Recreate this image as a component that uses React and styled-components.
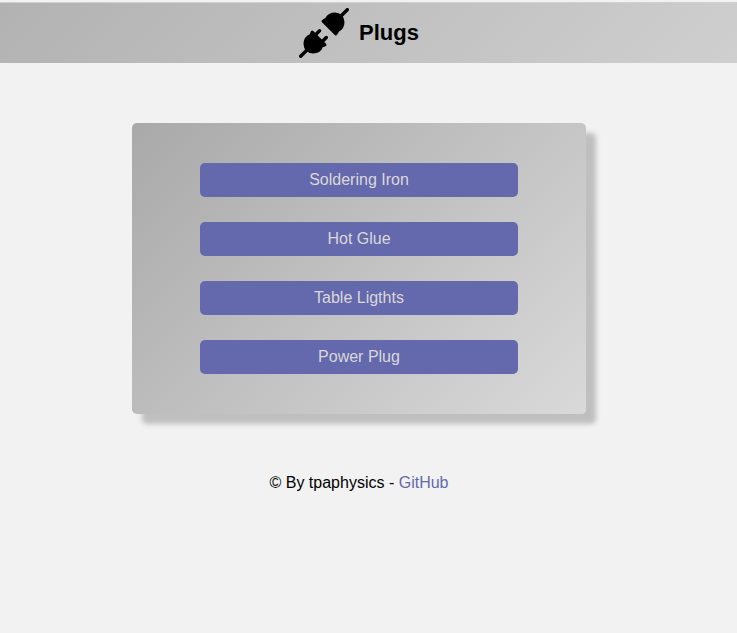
import React from "react";
import styled, { createGlobalStyle } from "styled-components";

const GlobalStyle = createGlobalStyle`
  * {
    box-sizing: border-box;
  }

  body {
    margin: 0;
    background: #f2f2f2;
    color: #000;
    font-family: "Liberation Sans", Arial, sans-serif;
    font-size: 16px;
    line-height: 18px;
  }
`;

const Page = styled.div`
  padding-top: 2px;
`;

const Header = styled.header`
  display: flex;
  align-items: center;
  justify-content: center;
  gap: 10px;
  padding: 5px 19px 5px 0;
  border-top: 1px solid #d0d0d0;
  background: linear-gradient(135deg, #b2b2b2, #cfcfcf);
`;

const Logo = styled.svg`
  display: block;
  width: 50px;
  height: 50px;
`;

const Title = styled.h1`
  margin: 0;
  font-size: 22px;
  line-height: 26px;
  font-weight: bold;
`;

const Main = styled.main`
  display: flex;
  justify-content: center;
  padding: 60px 19px 60px 0;
`;

const Card = styled.section`
  display: flex;
  flex-direction: column;
  align-items: center;
  gap: 25px;
  width: 90%;
  max-width: 454px;
  padding: 40px 0;
  border-radius: 5px;
  background: linear-gradient(135deg, #a9a9a9, #d9d9d9);
  box-shadow: 10px 10px 5px #bfbfbf;
`;

const DeviceButton = styled.button`
  width: 70%;
  height: 34px;
  padding: 0;
  border: 0;
  border-radius: 5px;
  background: #6468ac;
  color: #d9d9d9;
  font: inherit;
  cursor: pointer;
`;

const Footer = styled.footer`
  padding-right: 19px;
  text-align: center;
`;

const FooterLink = styled.a`
  color: #6468ac;
  text-decoration: none;
`;

const devices = ["Soldering Iron", "Hot Glue", "Table Ligthts", "Power Plug"];

function PlugLogo() {
  return (
    <Logo viewBox="0 0 50 50" aria-hidden="true">
      <g stroke="#000" strokeLinecap="round" strokeLinejoin="round">
        <path
          strokeWidth="3.4"
          d="M48.3 1.7 41 9M1.7 48.3 9 41M20.5 22.7 15.5 27.7M27.3 29.5 22.3 34.5"
        />
        <path
          strokeWidth="3"
          d="M24 13.2 27.5 11C29 8 32 6 36 6C40.5 6 44 9.5 44 14C44 18 42 21 39 22.5L36.8 26Z"
        />
        <path
          strokeWidth="3"
          d="M13.2 24 12 27.3C8.5 28.5 6 32 6 36C6 40.5 9.5 44 14 44C18 44 21.5 41.5 22.7 38L26 36.8Z"
        />
      </g>
    </Logo>
  );
}

export default function App() {
  return (
    <Page>
      <GlobalStyle />
      <Header>
        <PlugLogo />
        <Title>Plugs</Title>
      </Header>
      <Main>
        <Card>
          {devices.map((name) => (
            <DeviceButton key={name} type="button">
              {name}
            </DeviceButton>
          ))}
        </Card>
      </Main>
      <Footer>
        © By tpaphysics - <FooterLink href="#github">GitHub</FooterLink>
      </Footer>
    </Page>
  );
}
